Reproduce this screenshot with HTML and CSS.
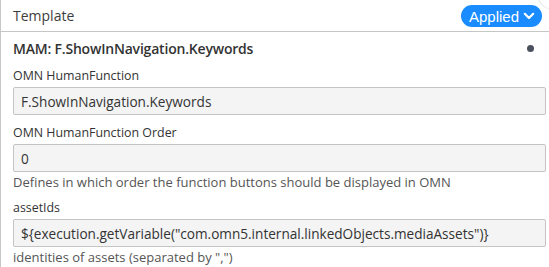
FILE: index.html
```html
<!DOCTYPE html>
<html lang="en">
<head>
  <meta charset="UTF-8" />
  <meta name="viewport" content="width=device-width, initial-scale=1.0" />
  <title>Template</title>
  <link rel="stylesheet" href="styles.css">
</head>
<body>
  <div class="panel">
    <div class="panel-header">
      <span class="panel-title">Template</span>
      <button class="pill" type="button">Applied
        <svg class="chevron" width="12" height="8" viewBox="0 0 12 8">
          <path d="M1.8 1.8 L6 6 L10.2 1.8" fill="none" stroke="#fff" stroke-width="2.2" stroke-linecap="round" stroke-linejoin="round"/>
        </svg>
      </button>
    </div>
    <span class="corner"></span>

    <div class="task-row">
      <span class="task-name">MAM: F.ShowInNavigation.Keywords</span>
      <span class="dot"></span>
    </div>

    <div class="field">
      <label for="hf">OMN HumanFunction</label>
      <input id="hf" class="input" type="text" value="F.ShowInNavigation.Keywords" readonly />
    </div>

    <div class="field">
      <label for="hfo">OMN HumanFunction Order</label>
      <input id="hfo" class="input" type="text" value="0" readonly />
      <div class="help">Defines in which order the function buttons should be displayed in OMN</div>
    </div>

    <div class="field">
      <label for="assets">assetIds</label>
      <input id="assets" class="input" type="text" value='${execution.getVariable("com.omn5.internal.linkedObjects.mediaAssets")}' readonly />
      <div class="help">identities of assets (separated by ",")</div>
    </div>
  </div>
</body>
</html>
```

FILE: styles.css
```css
body {
  margin: 0;
  font-family: "Open Sans", "Noto Sans", sans-serif;
  color: #333;
  background: white;
  overflow: hidden;
}
.panel {
  position: relative;
  height: 100vh;
  border-left: 1px solid #c8c8c8;
  box-sizing: border-box;
}
.panel-header {
  display: flex;
  justify-content: space-between;
  align-items: center;
  height: 31px;
  padding: 0 7px 0 12px;
  border-bottom: 1px solid #c6c6c6;
}
.panel-title {
  font-size: 14px;
  color: #3d3d3d;
}
.pill {
  display: flex;
  align-items: center;
  gap: 4px;
  height: 22px;
  margin-top: 1px;
  padding: 0 7px 0 8px;
  border: none;
  border-radius: 11px;
  background-color: #1a8cff;
  color: white;
  font-family: "Liberation Sans", Arial, sans-serif;
  font-size: 15px;
  cursor: pointer;
}
.corner {
  position: absolute;
  top: -21px;
  right: -19px;
  width: 30px;
  height: 30px;
  border-radius: 50%;
  background: white;
  box-shadow: 0 0 2px rgba(0,0,0,0.25);
}
.task-row {
  display: flex;
  justify-content: space-between;
  align-items: center;
  height: 20px;
  padding: 6px 15px 7px 12px;
}
.task-name {
  font-size: 14px;
  font-weight: 600;
  letter-spacing: -0.2px;
}
.dot {
  width: 7px;
  height: 7px;
  border-radius: 50%;
  background-color: #4a505e;
}
.field {
  display: flex;
  flex-direction: column;
  padding: 0 3px 6px 12px;
}
label {
  display: block;
  font-size: 12.4px;
  line-height: 18px;
  padding-top: 2px;
  margin-bottom: 2px;
}
.input {
  height: 28px;
  box-sizing: border-box;
  margin: 0 0 1px;
  padding: 0 7px;
  border: 1px solid #c4c4c4;
  border-radius: 2px;
  background-color: #f4f4f4;
  font-family: inherit;
  font-size: 13.6px;
  color: #333;
  outline: none;
}
.help {
  font-size: 13px;
  line-height: 18px;
  color: #555;
}
```
